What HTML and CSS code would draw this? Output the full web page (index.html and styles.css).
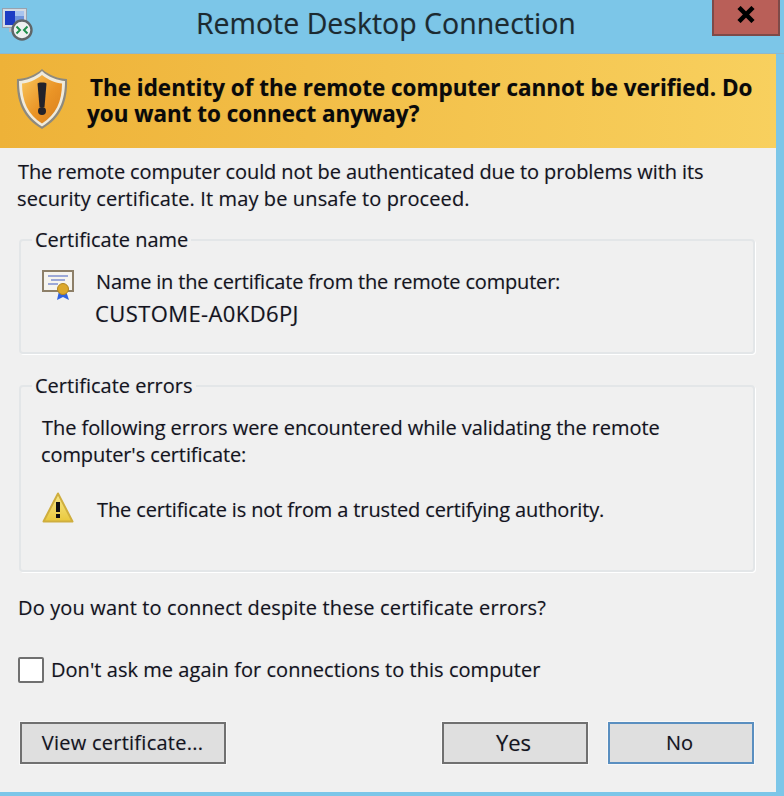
FILE: index.html
```html
<!doctype html>
<html lang="en">
<head>
    <meta charset="UTF-8">
    <title>Remote Desktop Connection</title>
    <link rel="stylesheet" href="styles.css">
</head>
<body>
<div class="window">
    <div class="titlebar">
        <svg class="app_icon" width="34" height="42" viewBox="0 0 34 42">
            <rect x="2.500" y="8.500" width="24" height="19" fill="#d4dbe4" stroke="#98a2ae"/>
            <rect x="5" y="11" width="10" height="14" fill="#1c3cc4"/>
            <rect x="15" y="11" width="9" height="14" fill="#6f94dc"/>
            <rect x="15" y="11" width="9" height="5" fill="#a8c4ee"/>
            <rect x="9" y="28" width="8" height="4" fill="#b4bcc6"/>
            <circle cx="22" cy="30" r="9.500" fill="#eef1f0" stroke="#5f6668" stroke-width="2.400"/>
            <path d="M16.500 26.500l3.500 3.500-3.500 3.500" fill="none" stroke="#1f8f4a" stroke-width="2"/>
            <path d="M27.500 26.500l-3.500 3.500 3.500 3.500" fill="none" stroke="#1f8f4a" stroke-width="2"/>
        </svg>
        <div class="title">Remote Desktop Connection</div>
        <div class="close">
            <svg width="20" height="17" viewBox="0 0 20 17">
                <path d="M3 1.500L17 15.500M17 1.500L3 15.500" fill="none" stroke="#000" stroke-width="4.500"/>
            </svg>
        </div>
    </div>
    <div class="content">
        <div class="banner">
            <svg class="shield" width="52" height="62" viewBox="0 0 52 62">
                <defs>
                    <linearGradient id="sh" x1="0" y1="0" x2="1" y2="1">
                        <stop offset="0" stop-color="#f8c65a"/>
                        <stop offset="0.55" stop-color="#ea9426"/>
                        <stop offset="1" stop-color="#d97f1e"/>
                    </linearGradient>
                </defs>
                <path d="M26 1C20 7 9 11 1 11c-1 22 6 39 25 50 19-11 26-28 25-50C43 11 32 7 26 1z" fill="#8e8a7e"/>
                <path d="M26 3C20 9 10 12.500 3 13c0 20 6 35 23 45.500C43 48 49 33 49 13 42 12.500 32 9 26 3z" fill="#f0ebdc"/>
                <path d="M26 7C20 12 12 15 6 15.500c0 18 6 31 20 40 14-9 20-22 20-40C40 15 32 12 26 7z" fill="url(#sh)"/>
                <path d="M21.500 15.500C21.500 14 30.500 14 30.500 15.500l-2 23.500h-5z" fill="#23222a"/>
                <circle cx="26" cy="43" r="4" fill="#23222a"/>
            </svg>
            <div class="banner_text">
                <div class="line_a">The identity of the remote computer cannot be verified. Do</div>
                <div class="line_b">you want to connect anyway?</div>
            </div>
        </div>
        <p class="intro">The remote computer could not be authenticated due to problems with its<br><span class="intro_b">security certificate. It may be unsafe to proceed.</span></p>

        <fieldset class="group name_group">
            <legend>Certificate name</legend>
            <div class="row">
                <svg class="icon" width="32" height="31" viewBox="0 0 32 31">
                    <rect x="1" y="1" width="30" height="20" fill="#f6f4ee" stroke="#8d7f68" stroke-width="2"/>
                    <path d="M6 6h20M9 10h14M6 14h10" stroke="#7f8fd0" stroke-width="1.500"/>
                    <path d="M17 21l-2 9 4-2 2-1 2 1 4 2-3-9z" fill="#2f62e0"/>
                    <circle cx="21" cy="19" r="5.500" fill="#dca82c" stroke="#b08420"/>
                </svg>
                <div class="row_text">
                    <div class="name_label">Name in the certificate from the remote computer:</div>
                    <div class="pc_name">CUSTOME-A0KD6PJ</div>
                </div>
            </div>
        </fieldset>

        <fieldset class="group error_group">
            <legend>Certificate errors</legend>
            <p class="err_intro">The following errors were encountered while validating the remote<br><span class="err_b">computer's certificate:</span></p>
            <div class="row warn_row">
                <svg class="icon warn_icon" width="32" height="31" viewBox="0 0 32 31">
                    <defs>
                        <linearGradient id="wa" x1="0" y1="0" x2="0" y2="1">
                            <stop offset="0" stop-color="#f8e88c"/>
                            <stop offset="1" stop-color="#e9c83c"/>
                        </linearGradient>
                    </defs>
                    <path d="M16 1.500L30.500 29.500H1.500z" fill="url(#wa)" stroke="#cfae3e" stroke-width="2" stroke-linejoin="round"/>
                    <rect x="14" y="10" width="4" height="10" fill="#111"/>
                    <rect x="14" y="22" width="4" height="4" fill="#111"/>
                </svg>
                <div class="row_text warn_text">The certificate is not from a trusted certifying authority.</div>
            </div>
        </fieldset>

        <p class="question">Do you want to connect despite these certificate errors?</p>
        <label class="check_row">
            <span class="check"></span>
            <span class="check_label">Don't ask me again for connections to this computer</span>
        </label>
        <div class="buttons">
            <div class="btn view">View certificate...</div>
            <div class="btn yes">Yes</div>
            <div class="btn no">No</div>
        </div>
    </div>
</div>
</body>
</html>
```

FILE: styles.css
```css
* {
    margin: 0;
    padding: 0;
    box-sizing: border-box;
}

html, body {
    width: 784px;
    height: 796px;
    overflow: hidden;
}

body {
    background: #7cc6e8;
    font-family: "Open Sans", "Liberation Sans", sans-serif;
    font-size: 20px;
    color: #14141e;
    text-shadow: 0 0 1px rgba(20, 20, 50, .3);
}

svg {
    filter: blur(0.5px);
}

.window {
    display: flex;
    flex-direction: column;
    height: 792px;
}

.titlebar {
    height: 54px;
    position: relative;
    border-bottom: 1px solid #8fb8cc;
}

.app_icon {
    display: block;
}

.title {
    position: absolute;
    left: 196px;
    top: 4px;
    font-size: 28.5px;
    line-height: 38px;
    color: #1c2a30;
}

.close {
    position: absolute;
    left: 712px;
    top: 0;
    width: 68px;
    height: 36px;
    background: #b95f58;
    border: 2px solid #7e4a48;
    border-top: 0;
    display: flex;
    justify-content: center;
    padding-top: 6px;
}

.content {
    width: 776px;
    flex: 1;
    background: #f0f0f0;
}

.banner {
    height: 94px;
    display: flex;
    align-items: flex-start;
    background: linear-gradient(to right, #eeb238, #f8d05e);
}

.shield {
    flex: none;
    margin: 14px 0 0 16px;
}

.banner_text {
    margin: 21px 0 0 19px;
    font-weight: 700;
    font-size: 22.45px;
    line-height: 26px;
    color: #0a0a0a;
    white-space: nowrap;
}

.line_a {
    margin-left: 3px;
}

.intro {
    margin: 10px 0 0 18px;
    line-height: 27px;
    white-space: nowrap;
    letter-spacing: -0.1px;
}

.intro_b {
    margin-left: -1px;
    letter-spacing: 0.12px;
}

.group {
    margin: 0 21px 0 19px;
    border: 2px solid #e3e6e8;
    border-radius: 4px;
    box-shadow: 1px 1px 0 #fff;
    padding: 0 0 0 21px;
}

.group legend {
    margin-left: -10px;
    padding: 0 3px 0 3px;
    line-height: 24px;
}

.name_group {
    margin-top: 16px;
    height: 126px;
}

.error_group {
    margin-top: 20px;
    height: 198px;
}

.row {
    display: flex;
    align-items: flex-start;
    gap: 22px;
}

.name_group .row {
    margin-top: 14px;
}

.icon {
    flex: none;
    margin-top: 4px;
}

.row_text {
    line-height: 31px;
    white-space: nowrap;
}

.name_label {
    letter-spacing: -0.18px;
}

.pc_name {
    margin-top: 1px;
    margin-left: -1px;
    font-size: 22px;
    letter-spacing: 0.4px;
}

.err_intro {
    margin-top: 16px;
    line-height: 27px;
    white-space: nowrap;
    letter-spacing: -0.06px;
}

.err_b {
    margin-left: -1px;
    letter-spacing: -0.1px;
}

.warn_row {
    margin-top: 26px;
    gap: 23px;
}

.warn_icon {
    margin-top: -2px;
}

.warn_text {
    letter-spacing: -0.13px;
}

.question {
    margin: 21px 0 0 18px;
    line-height: 30px;
    letter-spacing: 0.15px;
}

.check_row {
    display: flex;
    align-items: center;
    gap: 7px;
    margin: 32px 0 0 18px;
    line-height: 30px;
}

.check_label {
    letter-spacing: 0.04px;
}

.check {
    width: 26px;
    height: 26px;
    background: #fff;
    border: 2px solid #707070;
    border-radius: 2px;
}

.buttons {
    display: flex;
    margin: 37px 0 0 20px;
}

.btn {
    height: 42px;
    background: #dfdfdf;
    border: 2px solid #707070;
    line-height: 38px;
    text-align: center;
    box-shadow: 0 0 0 1px #f8f8f8;
}

.view {
    width: 206px;
    margin-right: 216px;
    letter-spacing: 0.26px;
    padding-right: 1px;
}

.yes {
    width: 146px;
    margin-right: 20px;
    font-size: 22px;
    line-height: 36px;
    padding-right: 3px;
}

.no {
    width: 146px;
    border-color: #5a8fc0;
    padding-right: 3px;
}
```
